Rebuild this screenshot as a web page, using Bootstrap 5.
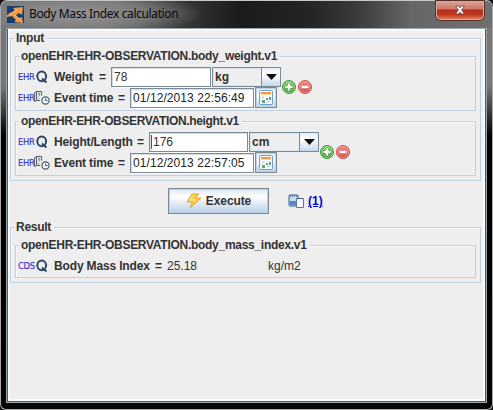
<!DOCTYPE html>
<html lang="en">
<head>
<meta charset="utf-8">
<title>Body Mass Index calculation</title>
<link href="https://cdn.jsdelivr.net/npm/bootstrap@5.3.0/dist/css/bootstrap.min.css" rel="stylesheet">
<style>
body{width:493px;height:410px;overflow:hidden;background:#111;font:12px/14px "Liberation Sans",Arial,sans-serif;color:#333}
.win{width:493px;height:410px;border:1px solid #aaa;border-top-color:#c5c8c8;border-radius:7px 7px 6px 6px;padding:0 5px 6px 5px;
 background:linear-gradient(180deg,#777 0,#777 28px,#777 85px,#000 135px,#050505 100%)}
.titlebar{height:27px;margin:0 -5px;padding:0 4px 0 6px;border-radius:6px 6px 0 0;
 background:radial-gradient(ellipse 116px 24px at 86px 13px,rgba(165,165,165,.75) 0,rgba(145,145,145,.65) 55%,rgba(120,120,120,0) 100%),linear-gradient(90deg,#777 0,#5c5c5c 90px,#303030 195px,#1b1b1b 240px,#252525 310px,#3a3a3a 355px,#666 410px,#707070 100%)}
.caption{font:12px/16px "Noto Sans","Open Sans",sans-serif;color:#080808;margin-left:5px;letter-spacing:-.38px}
.closer{width:48px;height:19px;border:1px solid #d4aaa4;border-top:0;border-radius:0 0 5px 5px;background:linear-gradient(#dda69b 0,#cf7466 45%,#b42d1b 50%,#bd3821 75%,#e07b54 100%);box-shadow:0 0 0 1px #57302b}
.pane{height:375px;border:2px solid #52595e;border-top:1px solid #161616;outline:1px solid #a0a5a8;outline-offset:-1px;background:#eee;padding:9px 4px 0 2px;box-shadow:inset 0 0 0 2px #f7faff}
.group{border:1px solid #c1d1df;box-shadow:inset 1px 1px 0 #f6f8fa}
.group>.cap{position:relative;display:table;height:14px;margin-top:-8px;padding:0 3px 0 2px;background:#eee;font-weight:bold;white-space:nowrap;letter-spacing:-.28px}
.outer{padding:0 4px}
.inner{padding-left:2px}
.outer>.cap{margin-left:-1px}
.inner>.cap{margin-left:1px}
.inner>.tight{letter-spacing:-.35px}
.g-in{height:143px}.g-sub{height:55px}
.line{height:21px;white-space:nowrap}
.tag{width:17px;font:8.4px/10px "DejaVu Sans",sans-serif;color:#2f29d0;letter-spacing:-.25px;-webkit-text-stroke:.1px #2f29d0}
.ic{width:18px;height:16px}
.ev{margin-left:-1px;margin-right:1px}
.lb{font-weight:bold;padding-left:1px;padding-right:5px;letter-spacing:-.15px}
.eq{margin-left:auto;letter-spacing:0}
.fld{height:20px;border:1px solid #7a8a99;box-shadow:inset 1px 1px 0 #d5dce2,1px 1px 0 #fff;background:#fff;padding-left:2px;line-height:18px}
.date{letter-spacing:.08px;color:#222}
.combo{width:70px;height:20px;border:1px solid #7a8a99;line-height:18px;font-weight:bold;padding-left:2px;background:#eee;box-shadow:inset 0 0 0 1px #dbe6f0}
.arr{width:19px;border-left:1px solid #7a8a99;background:linear-gradient(#e3edf6,#fff 35%,#c5d8e9);height:18px}
.cal{width:22px;height:21px;border:1px solid #7a8a99;background:linear-gradient(#dfeaf5,#fff 40%,#bed2e5);box-shadow:inset 0 0 0 1px #bfd2e4}
.exec{width:101px;height:26px;border:1px solid #7a8a99;box-shadow:inset 0 0 0 1px #b8cfe5;background:linear-gradient(#dce8f3,#fff 32%,#e7eff7 55%,#b8cfe5);font-weight:bold;color:#333;letter-spacing:-.1px}
svg{display:block;flex:none}
.lnk{color:#00d;font-weight:bold;text-decoration:underline}
.caret{border-left:1px solid #555;height:14px;margin-right:1px}
</style>
<script src="https://cdn.jsdelivr.net/npm/bootstrap@5.3.0/dist/js/bootstrap.bundle.min.js"></script>
</head>
<body>
<svg width="0" height="0" class="position-absolute">
 <defs>
 <linearGradient id="gg" x2="0" y2="1"><stop stop-color="#8bd078"/><stop offset="1" stop-color="#459d40"/></linearGradient>
 <linearGradient id="rg" x2="0" y2="1"><stop stop-color="#f08c84"/><stop offset="1" stop-color="#d6504c"/></linearGradient>
 <symbol id="q" viewBox="0 0 18 16"><ellipse cx="6.700" cy="7.300" rx="4.400" ry="4.900" fill="none" stroke="#2c4566" stroke-width="2"/><path d="M7 9.500l4.500 4" stroke="#2c4566" stroke-width="1.800"/></symbol>
 <symbol id="ev" viewBox="0 0 18 16"><path d="M.6 2.500l2-1v9l-2 1zM2.600 1.500h5v4M2.600 10.500h3.500" fill="none" stroke="#4b5b68"/><path d="M4 4q1.600-1.500 1.800 0T4.800 6.500M4.800 8v1" fill="none" stroke="#4b5b68" stroke-width=".8"/><circle cx="11.500" cy="10.500" r="3.600" fill="#edf3f6" stroke="#4b5b68" stroke-width="1.200"/><path d="M11.500 8.500v2h2" fill="none" stroke="#4b5b68"/></symbol>
 <symbol id="ca" viewBox="0 0 14 15"><rect x=".5" y=".5" width="13" height="14" rx="1" fill="#f4f9fd" stroke="#719bd0"/><path d="M2 2h10v3H2z" fill="#f29a43"/><path d="M2 4.500h10" stroke="#ffd09a"/><path d="M3 10h3v3H3zM7 8h2v2H7zM10 7h2v3h-2z" fill="#67a774"/><path d="M3 7h2v1H3zM8 11h3v1H8z" fill="#a8c8dc"/></symbol>
 <symbol id="pl" viewBox="0 0 16 16"><circle cx="8" cy="8" r="6.500" fill="url(#gg)" stroke="#459a42"/><circle cx="8" cy="8" r="5.500" fill="none" stroke="#a8d99c" stroke-width=".6"/><path d="M8 4.500v7M4.500 8h7" stroke="#fff" stroke-width="2.200"/></symbol>
 <symbol id="mi" viewBox="0 0 16 16"><circle cx="8" cy="8" r="6.500" fill="url(#rg)" stroke="#d34e4b"/><circle cx="8" cy="8" r="5.500" fill="none" stroke="#f5aaa4" stroke-width=".6"/><path d="M4.500 8h7" stroke="#fff" stroke-width="2.400"/></symbol>
 </defs>
</svg>
<div class="win">
 <div class="titlebar d-flex align-items-start">
  <svg width="17" height="17" viewBox="0 0 17 17" style="margin-top:5px"><path fill="#173d70" d="M0 0h17v17H0z"/><path d="M0 9l8-4-2-3 10-1-1 8-3-2-3 2 3 3 3-1 1 6-9-1 2-2-4-4-5 1z" fill="#f19a43"/><path d="M2 8l8-4M8 9l5 5" stroke="#ffc47c"/></svg>
  <span class="caption" style="margin-top:5px">Body Mass Index calculation</span>
  <div class="closer ms-auto d-flex justify-content-center align-items-center me-1"><svg width="12" height="10" viewBox="0 0 12 10"><path d="M2 1h2.500L6 2.800 7.500 1H10v1L7.600 5 10 8v1H7.500L6 7.200 4.500 9H2V8l2.400-3L2 2z" fill="#fff" stroke="#60393b" stroke-width=".8"/></svg></div>
 </div>
 <div class="pane">
  <section class="group outer g-in">
   <div class="cap"><span>Input</span></div>
   <div class="group inner g-sub" style="margin-top:11px">
    <div class="cap"><span>openEHR-EHR-OBSERVATION.body_weight.v1</span></div>
    <div class="d-flex align-items-center" style="margin-top:3px">
     <div>
      <div class="line d-flex align-items-center"><span class="tag">EHR</span><svg class="ic"><use href="#q"/></svg><span class="lb d-flex" style="width:58px">Weight<span class="eq">=</span></span><div class="fld" style="width:100px">78</div><div class="combo d-flex justify-content-between" style="width:69px;margin-left:1px">kg<span class="arr d-flex align-items-center justify-content-center"><svg width="11" height="6"><path d="M0 0h11L5.500 6z" fill="#111"/></svg></span></div></div>
      <div class="line d-flex align-items-center"><span class="tag">EHR</span><svg class="ic ev"><use href="#ev"/></svg><span class="lb d-flex" style="width:77px">Event time<span class="eq">=</span></span><div class="fld date" style="width:124px">01/12/2013 22:56:49</div><div class="cal d-flex align-items-center justify-content-center" style="margin-left:1px"><svg width="14" height="15"><use href="#ca"/></svg></div></div>
     </div>
     <svg width="16" height="16"><use href="#pl"/></svg><svg width="16" height="16"><use href="#mi"/></svg>
    </div>
   </div>
   <div class="group inner g-sub" style="margin-top:10px">
    <div class="cap tight"><span>openEHR-EHR-OBSERVATION.height.v1</span></div>
    <div class="d-flex align-items-center" style="margin-top:3px">
     <div>
      <div class="line d-flex align-items-center"><span class="tag">EHR</span><svg class="ic"><use href="#q"/></svg><span class="lb d-flex" style="width:96px">Height/Length<span class="eq">=</span></span><div class="fld d-flex align-items-center" style="width:99px;padding-left:1px"><span class="caret"></span>176</div><div class="combo d-flex justify-content-between" style="margin-left:1px">cm<span class="arr d-flex align-items-center justify-content-center"><svg width="11" height="6"><path d="M0 0h11L5.500 6z" fill="#111"/></svg></span></div></div>
      <div class="line d-flex align-items-center"><span class="tag">EHR</span><svg class="ic ev"><use href="#ev"/></svg><span class="lb d-flex" style="width:77px">Event time<span class="eq">=</span></span><div class="fld date" style="width:124px">01/12/2013 22:57:05</div><div class="cal d-flex align-items-center justify-content-center" style="margin-left:1px"><svg width="14" height="15"><use href="#ca"/></svg></div></div>
     </div>
     <svg width="16" height="16"><use href="#pl"/></svg><svg width="16" height="16"><use href="#mi"/></svg>
    </div>
   </div>
  </section>
  <div class="d-flex align-items-center" style="margin:7px 0 13px 158px">
   <div class="exec d-flex align-items-center justify-content-center gap-1"><svg width="16" height="16" viewBox="0 0 16 16"><path d="M6 1h7L9.500 5H15L4 15l2.500-6H1z" fill="#f8ce45" stroke="#d49a2c" stroke-width=".8"/><path d="M7 2L4 7h6" fill="none" stroke="#fff0a0"/></svg>Execute</div>
   <svg width="17" height="15" viewBox="0 0 17 15" style="margin-left:19px"><rect x="1" y="1" width="9" height="11" rx="1" fill="#c4dbf2" stroke="#315d95"/><path d="M2 7h7v4H2z" fill="#5389c7"/><path d="M2 2h7" stroke="#254f82" stroke-dasharray="1 1"/><path d="M8.500 4.500h7v9h-7z" fill="#f5f8fb" stroke="#65778c"/><path d="M9 4.500h6" stroke="#233d61" stroke-dasharray="1 1"/></svg>
   <a class="lnk" style="margin-left:3px">(1)</a>
  </div>
  <section class="group outer" style="height:56px">
   <div class="cap"><span>Result</span></div>
   <div class="group inner" style="height:33px;margin-top:11px">
    <div class="cap"><span>openEHR-EHR-OBSERVATION.body_mass_index.v1</span></div>
    <div class="line d-flex align-items-center" style="margin-top:3px"><span class="tag">CDS</span><svg class="ic"><use href="#q"/></svg><span class="lb d-flex" style="width:114px">Body Mass Index<span class="eq">=</span></span><span style="width:101px">25.18</span><span>kg/m2</span></div>
   </div>
  </section>
 </div>
</div>
</body>
</html>
